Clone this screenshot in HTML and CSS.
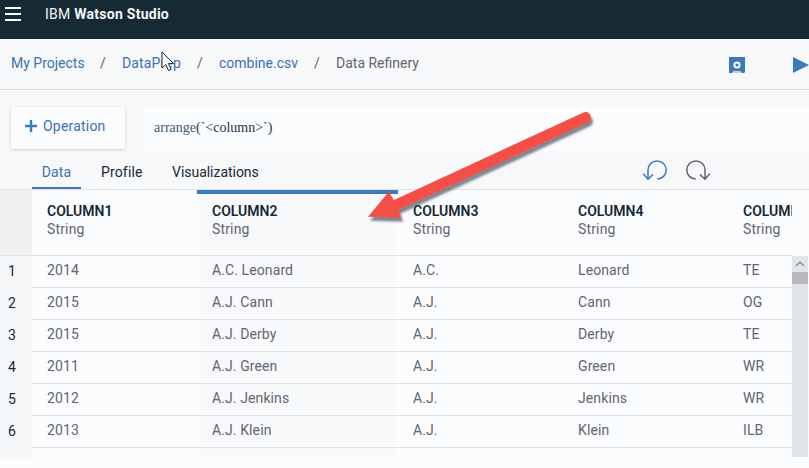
FILE: index.html
```html
<!DOCTYPE html>
<html lang="en">
<head>
<meta charset="utf-8">
<title>IBM Watson Studio</title>
<link rel="stylesheet" href="styles.css">
</head>
<body>
<div class="app">
  <header class="topbar">
    <svg class="menu" width="16" height="14" viewBox="0 0 16 14"><path d="M0 1h16M0 7h16M0 13h16" stroke="#fff" stroke-width="2"/></svg>
    <div class="brand">IBM <b>Watson Studio</b></div>
  </header>
  <nav class="crumbs">
    <a class="c1">My Projects</a><i>/</i><a class="c2">DataPrep</a><i>/</i><a class="c3">combine.csv</a><i>/</i><span>Data Refinery</span>
    <svg class="save" width="16" height="16" viewBox="0 0 16 16"><path d="M0 0h16v15l-1 1h-2l-2-2H5l-2 2H0z" fill="#3d7ab9"/><circle cx="8" cy="8" r="2.6" fill="#3d7ab9" stroke="#fbfcfe" stroke-width="2"/><path d="M5 14h6l1 2H4z" fill="#c6d0df"/></svg>
    <svg class="play" width="16" height="16" viewBox="0 0 16 16"><path d="M0 0l16 8-16 8z" fill="#3d7ab9"/></svg>
  </nav>
  <section class="command">
    <div class="operation"><svg width="12" height="12" viewBox="0 0 12 12"><path d="M6 0v12M0 6h12" stroke="#3d7ab9" stroke-width="2.4"/></svg><span>Operation</span></div>
    <div class="code"><em>arrange</em>(`&lt;column&gt;`)</div>
  </section>
  <div class="tabs">
    <div class="tab active">Data</div><div class="tab profile">Profile</div><div class="tab vis">Visualizations</div>
    <svg class="history" width="70" height="24" viewBox="0 0 70 24" fill="none" stroke-width="1.5">
      <path d="M15.2 21.1a9.1 9.1 0 1 0-9.2-9.1v9.5M1.3 15.8l4.7 5.4 5-4.6" stroke="#3d7ab9"/>
      <path d="M53.8 21.1a9.1 9.1 0 1 1 9.2-9.1v9.5M58 16.6l5 4.6 4.7-5.4" stroke="#62656f"/>
    </svg>
  </div>
  <main class="grid">
    <div class="numbers"><div class="corner"></div><p>1</p><p>2</p><p>3</p><p>4</p><p>5</p><p>6</p></div>
    <div class="col"><div class="head"><b>COLUMN1</b><span>String</span></div><p>2014</p><p>2015</p><p>2015</p><p>2011</p><p>2012</p><p>2013</p></div>
    <div class="col selected"><div class="head"><b>COLUMN2</b><span>String</span></div><p>A.C. Leonard</p><p>A.J. Cann</p><p>A.J. Derby</p><p>A.J. Green</p><p>A.J. Jenkins</p><p>A.J. Klein</p></div>
    <div class="col"><div class="head"><b>COLUMN3</b><span>String</span></div><p>A.C.</p><p>A.J.</p><p>A.J.</p><p>A.J.</p><p>A.J.</p><p>A.J.</p></div>
    <div class="col"><div class="head"><b>COLUMN4</b><span>String</span></div><p>Leonard</p><p>Cann</p><p>Derby</p><p>Green</p><p>Jenkins</p><p>Klein</p></div>
    <div class="col last"><div class="head"><b>COLUMN5</b><span>String</span></div><p>TE</p><p>OG</p><p>TE</p><p>WR</p><p>WR</p><p>ILB</p></div>
    <div class="scroll"><svg width="16" height="16" viewBox="0 0 16 16"><path d="M4 10l4-4 4 4" fill="none" stroke="#85858d" stroke-width="1.3"/></svg><div class="thumb"></div></div>
  </main>
  <svg class="arrow" width="250" height="130" viewBox="0 0 250 130">
    <defs><filter id="shade" x="-10%" y="-10%" width="120%" height="130%"><feDropShadow dx="2" dy="4" stdDeviation="1.2" flood-color="#444454" flood-opacity=".65"/></filter></defs>
    <path filter="url(#shade)" d="M8 116.8L29 91.5l4.5 8.7L223.5 12.5a5.4 5.4 0 0 1 5 9.5L38.5 109.7l2.8 8.1z" fill="#f45046"/>
  </svg>
  <svg class="pointer" width="14" height="21" viewBox="0 0 14 21"><path d="M1 1v16l3.8-3.5 2.7 6 2.6-1.1-2.6-5.8h5z" fill="#fff" stroke="#162a34"/></svg>
</div>
</body>
</html>
```
FILE: styles.css
```css
* { box-sizing: border-box; }
body { margin: 0; background: #fbfcfe; font: 14px/18px Roboto, sans-serif; color: #626570; }
.app { position: relative; width: 809px; height: 468px; overflow: hidden; }
.topbar { height: 39px; background: #162a34; color: #f4f6f8; display: flex; padding: 7px 0 0 5px; }
.menu { flex: none; }
.brand { margin-left: 24px; line-height: 14px; letter-spacing: .26px; }
.brand b { font-weight: 700; }
.crumbs { height: 51px; background: #f7f8fa; border-bottom: 1px solid #dfe3e6; display: flex; align-items: center; padding: 0 0 3px 11px; white-space: nowrap; }
.crumbs a { color: #3d70b2; }
.crumbs .c1 { width: 73px; }
.crumbs .c2 { width: 59px; letter-spacing: .15px; }
.crumbs .c3 { width: 79px; }
.crumbs i { font-style: normal; margin: 0 16px; width: 6px; }
.save { margin: 4px 0 0 auto; flex: none; }
.play { margin: 4px 0 0 48px; flex: none; }
.command { height: 61px; background: #f7f8fa; display: flex; padding-top: 17px; }
.operation { width: 114px; height: 42px; margin-left: 11px; background: #fbfcfe; box-shadow: 0 1px 3px #cdd2d7; color: #3d70b2; display: flex; align-items: center; padding: 0 0 4px 14px; gap: 6px; letter-spacing: .2px; }
.code { flex: 1; height: 44px; margin-left: 18px; background: #fbfcfe; padding: 12px 11px; font: 14px/18px "Liberation Serif", serif; color: #243746; }
.code em { font-style: normal; color: #41597a; }
.tabs { height: 39px; background: #f7f8fa; border-bottom: 1px solid #dfe3e6; display: flex; padding-left: 32px; color: #152935; }
.tab { height: 38px; line-height: 42px; letter-spacing: .15px; }
.active { width: 49px; text-align: center; color: #3d70b2; border-bottom: 2px solid #3d7ab9; }
.profile { margin-left: 20px; width: 71px; }
.vis { width: 86px; letter-spacing: -.03px; white-space: nowrap; }
.history { margin: 7px 0 0 384px; flex: none; }
.grid { height: 267px; display: grid; grid-template-columns: 32px 165px 201px 165px 165px 64px 16px; }
.numbers { background: #f5f6f8; color: #152935; }
.corner { height: 66px; background: #eef0f2; border-bottom: 1px solid #dfe3e6; }
.grid p { margin: 0; height: 32px; line-height: 28px; }
.numbers p { padding-left: 8px; line-height: 31px; }
.col { overflow: hidden; white-space: nowrap; letter-spacing: .1px; }
.head { height: 66px; border-bottom: 1px solid #dfe3e6; padding: 12px 0 0 15px; letter-spacing: .15px; }
.head b { display: block; color: #152935; font-weight: 600; letter-spacing: 0; }
.head span { display: block; }
.col p { padding-left: 15px; border-bottom: 1px solid #dfe3e6; }
.selected { background: linear-gradient(to right, #fbfcfe 3px, #f8f9fb 3px 198px, #fbfcfe 198px); }
.selected .head { border-top: 4px solid #3d7ab9; padding-top: 8px; }
.scroll { margin-top: 66px; background: #e2e5e7; }
.scroll svg { display: block; }
.thumb { height: 12px; background: #b7b8be; }
.arrow { position: absolute; left: 360px; top: 100px; }
.pointer { position: absolute; left: 161px; top: 51px; }
```
